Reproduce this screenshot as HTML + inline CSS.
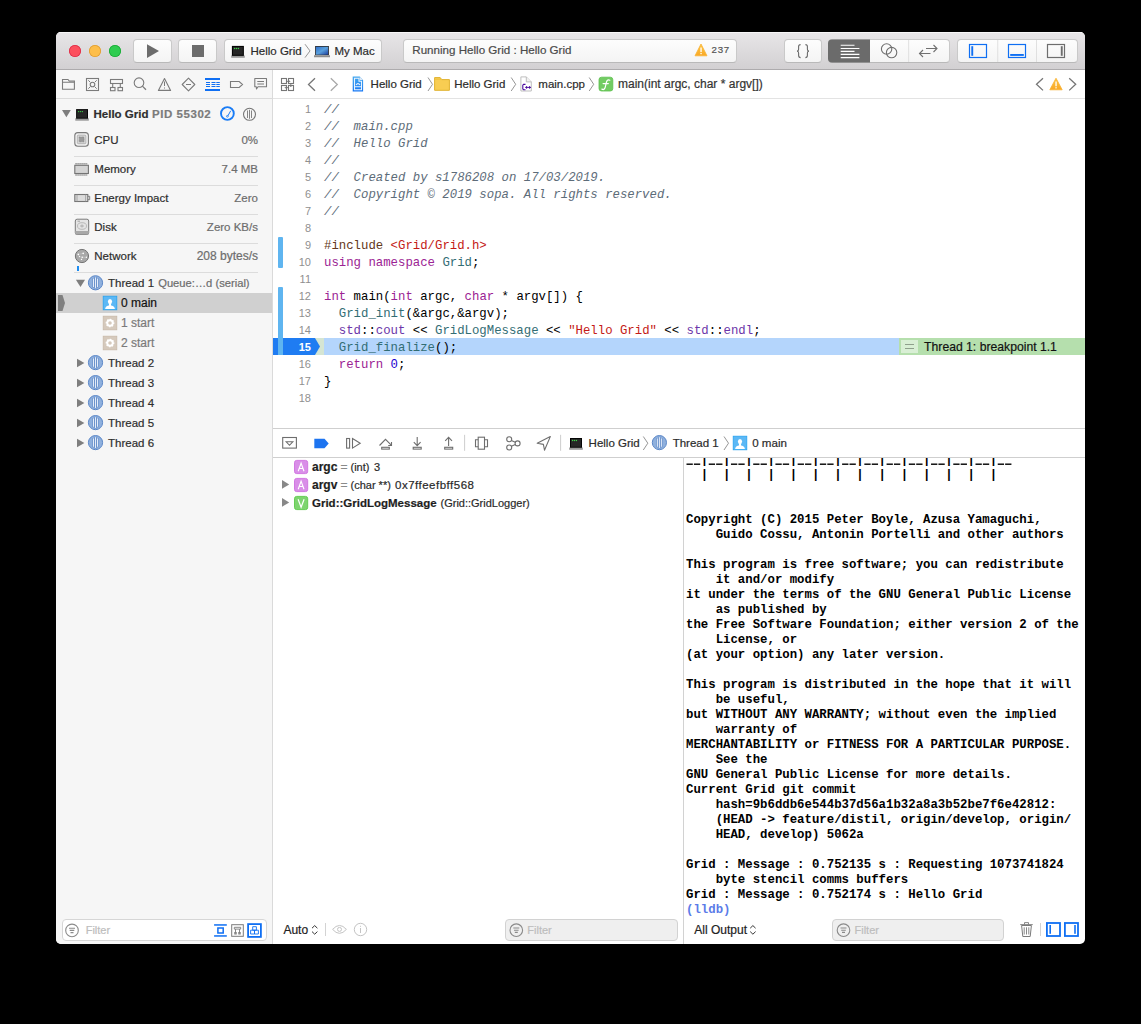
<!DOCTYPE html>
<html><head><meta charset="utf-8">
<style>
html,body{margin:0;padding:0}
body{width:1141px;height:1024px;background:#000;position:relative;overflow:hidden;font-family:"Liberation Sans",sans-serif;}
#win{position:absolute;left:0;top:0;width:1141px;height:1024px;clip-path:inset(32px 56px 80px 56px round 5px);background:#fff}
.a{position:absolute}
.t{position:absolute;white-space:pre;line-height:1;-webkit-text-stroke:0.2px currentColor}
#title{left:56px;top:32px;width:1029px;height:37px;background:linear-gradient(#e8e6e8,#d2d0d2);border-bottom:1px solid #adabad;box-shadow:inset 0 1px 0 #f7f6f7}
.btn{position:absolute;top:39px;height:23.5px;background:linear-gradient(#fdfdfd,#f4f4f4);border:1px solid #c9c9c9;border-bottom-color:#b9b9b9;border-radius:4px;box-sizing:border-box}
#nav{left:56px;top:70px;width:216px;height:28px;background:#f6f6f6;border-bottom:1px solid #dadada}
#side{left:56px;top:99px;width:216px;height:846px;background:#f6f6f6}
#sidev{left:272px;top:70px;width:1px;height:875px;background:#dadada}
#jump{left:273px;top:70px;width:812px;height:28px;background:#fff;border-bottom:1px solid #e3e3e3}
.ln{position:absolute;left:273px;width:38px;text-align:right;font-family:"Liberation Sans",sans-serif;font-size:11px;color:#8f8f8f;line-height:17px}
.cl{position:absolute;left:324px;white-space:pre;font-family:"Liberation Mono",monospace;font-size:12.33px;line-height:17px;color:#000}
.cm{color:#5d6c79;font-style:italic}
.kw{color:#9b2393}
.pp{color:#643820}
.st{color:#c41a16}
.pt{color:#326d74}
.ot{color:#6c36a9}
.nu{color:#1c00cf}
.con{position:absolute;left:686px;white-space:pre;font-family:"Liberation Mono",monospace;font-weight:bold;font-size:12.35px;line-height:15px;color:#000}
</style></head><body>
<div id="win">
  <div class="a" id="title"></div>
  <div class="a" style="left:69px;top:45px;width:12px;height:12px;border-radius:50%;background:#fc4f5e;box-shadow:inset 0 0 0 0.8px #dd2c48"></div>
  <div class="a" style="left:89px;top:45px;width:12px;height:12px;border-radius:50%;background:#fdbe4a;box-shadow:inset 0 0 0 0.8px #df9c33"></div>
  <div class="a" style="left:109px;top:45px;width:12px;height:12px;border-radius:50%;background:#2fcc50;box-shadow:inset 0 0 0 0.8px #1aa936"></div>
  <div class="btn" style="left:133px;width:38.6px"></div>
  <div class="btn" style="left:178px;width:38.6px"></div>
  <div class="btn" style="left:223.5px;width:158px"></div>
  <div class="btn" style="left:403.3px;width:334px"></div>
  <div class="btn" style="left:783.5px;width:38px"></div>
  <div class="btn" style="left:827.5px;width:122px"></div>
  <div class="btn" style="left:956.5px;width:121px"></div>
  <div class="a" id="nav"></div>
  <div class="a" id="side"></div>
  <div class="a" id="jump"></div>
  <div class="a" id="sidev"></div>
  <div class="t" style="left:250.5px;top:46px;font-size:11.5px;color:#2b2b2b;">Hello Grid</div>
  <div class="t" style="left:334.5px;top:46px;font-size:11.5px;color:#2b2b2b;">My Mac</div>
  <div class="t" style="left:412.3px;top:44px;font-size:11.6px;color:#4a4a4a;">Running Hello Grid : Hello Grid</div>
  <div class="t" style="left:711.6px;top:45px;font-size:9.7px;color:#555;letter-spacing:0.7px">237</div>
  <div class="t" style="left:370.6px;top:79px;font-size:11.5px;color:#2b2b2b;">Hello Grid</div>
  <div class="t" style="left:454.2px;top:79px;font-size:11.5px;color:#2b2b2b;">Hello Grid</div>
  <div class="t" style="left:538.3px;top:79px;font-size:11.5px;color:#2b2b2b;">main.cpp</div>
  <div class="t" style="left:618px;top:78px;font-size:12px;color:#333;">main(int argc, char * argv[])</div>
  <div class="t" style="left:93.5px;top:109px;font-size:11.5px;font-weight:bold;color:#2e2e2e;">Hello Grid</div>
  <div class="t" style="left:152px;top:109px;font-size:11.5px;font-weight:bold;color:#7b7b7b;letter-spacing:0.55px">PID 55302</div>
  <div class="t" style="left:94.3px;top:135px;font-size:11.5px;color:#2e2e2e;">CPU</div>
  <div class="t" style="right:883px;top:135px;font-size:11.5px;color:#6d6d6d;">0%</div>
  <div class="t" style="left:94.3px;top:164px;font-size:11.5px;color:#2e2e2e;">Memory</div>
  <div class="t" style="right:883px;top:164px;font-size:11.5px;color:#6d6d6d;">7.4 MB</div>
  <div class="t" style="left:94.3px;top:193px;font-size:11.5px;color:#2e2e2e;">Energy Impact</div>
  <div class="t" style="right:883px;top:193px;font-size:11.5px;color:#6d6d6d;">Zero</div>
  <div class="t" style="left:94.3px;top:222px;font-size:11.5px;color:#2e2e2e;">Disk</div>
  <div class="t" style="right:883px;top:222px;font-size:11.5px;color:#6d6d6d;">Zero KB/s</div>
  <div class="t" style="left:94.3px;top:251px;font-size:11.5px;color:#2e2e2e;">Network</div>
  <div class="t" style="right:883px;top:250px;font-size:12px;color:#6d6d6d;">208 bytes/s</div>
  <div class="a" style="left:74px;top:156px;width:184px;height:1px;background:#dcdcdc;"></div>
  <div class="a" style="left:74px;top:185px;width:184px;height:1px;background:#dcdcdc;"></div>
  <div class="a" style="left:74px;top:214px;width:184px;height:1px;background:#dcdcdc;"></div>
  <div class="a" style="left:74px;top:243px;width:184px;height:1px;background:#dcdcdc;"></div>
  <div class="a" style="left:74px;top:272px;width:184px;height:1px;background:#dcdcdc;"></div>
  <div class="a" style="left:77px;top:266px;width:2px;height:5px;background:#1d8cf0;"></div>
  <div class="t" style="left:108px;top:278px;font-size:11.5px;color:#2e2e2e;">Thread 1</div>
  <div class="t" style="left:158.2px;top:278px;font-size:11.2px;color:#6d6d6d;">Queue:…d (serial)</div>
  <div class="a" style="left:56px;top:293px;width:216px;height:20px;background:#d0d0d0;"></div>
  <div class="t" style="left:121px;top:297px;font-size:12px;color:#111;">0 main</div>
  <div class="t" style="left:121px;top:317px;font-size:12px;color:#7a7a7a;">1 start</div>
  <div class="t" style="left:121px;top:337px;font-size:12px;color:#7a7a7a;">2 start</div>
  <div class="t" style="left:108px;top:358px;font-size:11.5px;color:#2e2e2e;">Thread 2</div>
  <div class="t" style="left:108px;top:378px;font-size:11.5px;color:#2e2e2e;">Thread 3</div>
  <div class="t" style="left:108px;top:398px;font-size:11.5px;color:#2e2e2e;">Thread 4</div>
  <div class="t" style="left:108px;top:418px;font-size:11.5px;color:#2e2e2e;">Thread 5</div>
  <div class="t" style="left:108px;top:438px;font-size:11.5px;color:#2e2e2e;">Thread 6</div>
  <div class="a" style="left:278px;top:237px;width:5px;height:31px;background:#5fb5f0;border-radius:1px"></div>
  <div class="a" style="left:278px;top:287px;width:5px;height:68px;background:#5fb5f0;border-radius:1px"></div>
  <div class="a" style="left:320px;top:338px;width:765px;height:17px;background:#b4d5fc;"></div>
  <div class="a" style="left:314px;top:338px;width:10px;height:17px;background:#d5e5d3;"></div>
  <div class="a" style="left:899px;top:338px;width:186px;height:17px;background:#b5dfad;"></div>
  <div class="a" style="left:901px;top:340px;width:17px;height:13px;background:#d9efd5;"></div>
  <div class="a" style="left:905px;top:344px;width:9px;height:1px;background:#8fa08c;"></div>
  <div class="a" style="left:905px;top:348px;width:9px;height:1px;background:#8fa08c;"></div>
  <div class="t" style="left:924.1px;top:341px;font-size:12.2px;color:#111;">Thread 1: breakpoint 1.1</div>
  <svg class="a" style="left:273px;top:338px" width="48" height="17"><path d="M0 0H42L47 8.5L42 17H0Z" fill="#1f7cf2"/></svg>
  <div class="a" style="left:278px;top:338px;width:5px;height:17px;background:#5fb5f0;"></div>
  <div id="code">
  <div class="ln" style="top:101px">1</div><div class="cl" style="top:101.7px"><span class="cm">//</span></div>
  <div class="ln" style="top:118px">2</div><div class="cl" style="top:118.7px"><span class="cm">//  main.cpp</span></div>
  <div class="ln" style="top:135px">3</div><div class="cl" style="top:135.7px"><span class="cm">//  Hello Grid</span></div>
  <div class="ln" style="top:152px">4</div><div class="cl" style="top:152.7px"><span class="cm">//</span></div>
  <div class="ln" style="top:169px">5</div><div class="cl" style="top:169.7px"><span class="cm">//  Created by s1786208 on 17/03/2019.</span></div>
  <div class="ln" style="top:186px">6</div><div class="cl" style="top:186.7px"><span class="cm">//  Copyright © 2019 sopa. All rights reserved.</span></div>
  <div class="ln" style="top:203px">7</div><div class="cl" style="top:203.7px"><span class="cm">//</span></div>
  <div class="ln" style="top:220px">8</div>
  <div class="ln" style="top:237px">9</div><div class="cl" style="top:237.7px"><span class="pp">#include </span><span class="st">&lt;Grid/Grid.h&gt;</span></div>
  <div class="ln" style="top:254px">10</div><div class="cl" style="top:254.7px"><span class="kw">using namespace</span> <span class="pt">Grid</span>;</div>
  <div class="ln" style="top:271px">11</div>
  <div class="ln" style="top:288px">12</div><div class="cl" style="top:288.7px"><span class="kw">int</span> main(<span class="kw">int</span> argc, <span class="kw">char</span> * argv[]) {</div>
  <div class="ln" style="top:305px">13</div><div class="cl" style="top:305.7px">  <span class="pt">Grid_init</span>(&amp;argc,&amp;argv);</div>
  <div class="ln" style="top:322px">14</div><div class="cl" style="top:322.7px">  <span class="ot">std</span>::<span class="ot">cout</span> &lt;&lt; <span class="pt">GridLogMessage</span> &lt;&lt; <span class="st">"Hello Grid"</span> &lt;&lt; <span class="ot">std</span>::<span class="ot">endl</span>;</div>
  <div class="ln" style="top:339px;color:#fff;font-weight:bold">15</div><div class="cl" style="top:339.7px">  <span class="pt">Grid_finalize</span>();</div>
  <div class="ln" style="top:356px">16</div><div class="cl" style="top:356.7px">  <span class="kw">return</span> <span class="nu">0</span>;</div>
  <div class="ln" style="top:373px">17</div><div class="cl" style="top:373.7px">}</div>
  <div class="ln" style="top:390px">18</div>
  </div>
  <div class="a" style="left:273px;top:428px;width:812px;height:1px;background:#cfcfcf;"></div>
  <div class="a" style="left:273px;top:457px;width:812px;height:1px;background:#cfcfcf;"></div>
  <div class="t" style="left:588.6px;top:438px;font-size:11.5px;color:#2b2b2b;">Hello Grid</div>
  <div class="t" style="left:672.7px;top:438px;font-size:11.5px;color:#2b2b2b;">Thread 1</div>
  <div class="t" style="left:752.2px;top:437px;font-size:11.6px;color:#2b2b2b;">0 main</div>
  <div class="a" style="left:683px;top:458px;width:1px;height:487px;background:#d2d2d2;"></div>
  <div class="t" style="left:312px;top:461px;font-size:12px;font-weight:bold;color:#1e1e1e;">argc</div>
  <div class="t" style="left:340.5px;top:461px;font-size:12px;color:#8a8a8a;">=</div>
  <div class="t" style="left:350.5px;top:462px;font-size:11px;color:#2a2a2a;">(int)</div>
  <div class="t" style="left:374px;top:462px;font-size:11px;color:#2a2a2a;">3</div>
  <div class="t" style="left:312px;top:479px;font-size:12px;font-weight:bold;color:#1e1e1e;">argv</div>
  <div class="t" style="left:340.5px;top:479px;font-size:12px;color:#8a8a8a;">=</div>
  <div class="t" style="left:350.5px;top:480px;font-size:11px;color:#2a2a2a;">(char **)</div>
  <div class="t" style="left:395px;top:480px;font-size:11.5px;color:#2a2a2a;letter-spacing:0.5px">0x7ffeefbff568</div>
  <div class="t" style="left:312px;top:498px;font-size:11.5px;font-weight:bold;color:#1e1e1e;">Grid::GridLogMessage</div>
  <div class="t" style="left:440.5px;top:498px;font-size:11px;color:#2a2a2a;">(Grid::GridLogger)</div>
  <div class="a" style="left:684px;top:458px;width:401px;height:460px;overflow:hidden"><div class="con" style="left:2px;top:-5.3px">  |  |  |  |  |  |  |  |  |  |  |  |  |  |  
  |  |  |  |  |  |  |  |  |  |  |  |  |  |


Copyright (C) 2015 Peter Boyle, Azusa Yamaguchi,
    Guido Cossu, Antonin Portelli and other authors

This program is free software; you can redistribute
    it and/or modify
it under the terms of the GNU General Public License
    as published by
the Free Software Foundation; either version 2 of the
    License, or
(at your option) any later version.

This program is distributed in the hope that it will
    be useful,
but WITHOUT ANY WARRANTY; without even the implied
    warranty of
MERCHANTABILITY or FITNESS FOR A PARTICULAR PURPOSE.
    See the
GNU General Public License for more details.
Current Grid git commit
    hash=9b6ddb6e544b37d56a1b32a8a3b52be7f6e42812:
    (HEAD -&gt; feature/distil, origin/develop, origin/
    HEAD, develop) 5062a

Grid : Message : 0.752135 s : Requesting 1073741824
    byte stencil comms buffers
Grid : Message : 0.752174 s : Hello Grid
<span style="color:#5b7be8">(lldb)</span></div></div>
  <svg class="a" style="left:0;top:0" width="1141" height="1024"><g fill="#000"><rect x="686.50" y="463.5" width="6.3" height="1.4"/><rect x="693.91" y="463.5" width="6.3" height="1.4"/><rect x="708.73" y="463.5" width="6.3" height="1.4"/><rect x="716.14" y="463.5" width="6.3" height="1.4"/><rect x="730.96" y="463.5" width="6.3" height="1.4"/><rect x="738.37" y="463.5" width="6.3" height="1.4"/><rect x="753.19" y="463.5" width="6.3" height="1.4"/><rect x="760.60" y="463.5" width="6.3" height="1.4"/><rect x="775.42" y="463.5" width="6.3" height="1.4"/><rect x="782.83" y="463.5" width="6.3" height="1.4"/><rect x="797.65" y="463.5" width="6.3" height="1.4"/><rect x="805.06" y="463.5" width="6.3" height="1.4"/><rect x="819.88" y="463.5" width="6.3" height="1.4"/><rect x="827.29" y="463.5" width="6.3" height="1.4"/><rect x="842.11" y="463.5" width="6.3" height="1.4"/><rect x="849.52" y="463.5" width="6.3" height="1.4"/><rect x="864.34" y="463.5" width="6.3" height="1.4"/><rect x="871.75" y="463.5" width="6.3" height="1.4"/><rect x="886.57" y="463.5" width="6.3" height="1.4"/><rect x="893.98" y="463.5" width="6.3" height="1.4"/><rect x="908.80" y="463.5" width="6.3" height="1.4"/><rect x="916.21" y="463.5" width="6.3" height="1.4"/><rect x="931.03" y="463.5" width="6.3" height="1.4"/><rect x="938.44" y="463.5" width="6.3" height="1.4"/><rect x="953.26" y="463.5" width="6.3" height="1.4"/><rect x="960.67" y="463.5" width="6.3" height="1.4"/><rect x="975.49" y="463.5" width="6.3" height="1.4"/><rect x="982.90" y="463.5" width="6.3" height="1.4"/><rect x="997.72" y="463.5" width="6.3" height="1.4"/><rect x="1005.13" y="463.5" width="6.3" height="1.4"/></g></svg>
<svg class="a" style="left:0;top:0" width="1141" height="1024" viewBox="0 0 1141 1024">
 <defs>
  <linearGradient id="gproj" x1="0" y1="0" x2="0" y2="1"><stop offset="0" stop-color="#45a8ee"/><stop offset="1" stop-color="#1577f5"/></linearGradient>
  <linearGradient id="gwarn" x1="0" y1="0" x2="0" y2="1"><stop offset="0" stop-color="#fdc646"/><stop offset="1" stop-color="#f9a825"/></linearGradient>
  <linearGradient id="gscreen" x1="0" y1="0" x2="1" y2="1"><stop offset="0" stop-color="#2f6fc9"/><stop offset="0.5" stop-color="#5aa0dc"/><stop offset="1" stop-color="#1c3f9e"/></linearGradient>
  <radialGradient id="gnet" cx="0.5" cy="0.4" r="0.6"><stop offset="0" stop-color="#b8b8b8"/><stop offset="1" stop-color="#6e6e6e"/></radialGradient>
 </defs>
 <!-- play / stop -->
 <path d="M147 44.2L159 51L147 57.9Z" fill="#6c6c6c"/>
 <rect x="192" y="45" width="12" height="12" fill="#6c6c6c"/>
 <!-- scheme terminal icon -->
 <rect x="231.2" y="55.5" width="13.6" height="2.3" fill="#9a9a9a"/>
 <rect x="231.9" y="45.9" width="12" height="10" fill="#050505"/>
 <rect x="233" y="47" width="9.8" height="7.8" fill="#262626"/>
 <circle cx="234.6" cy="48.5" r="0.7" fill="#3fd24a"/><circle cx="236.5" cy="48.5" r="0.7" fill="#3fd24a"/><circle cx="238.4" cy="48.5" r="0.7" fill="#3fd24a"/>
 <path d="M305 44.2L310 50.9L305 57.6" fill="none" stroke="#8a8a8a" stroke-width="0.9"/>
 <!-- laptop -->
 <rect x="315.1" y="46" width="13.8" height="9.2" fill="#2b2b2b"/>
 <rect x="315.9" y="46.8" width="12.2" height="7.9" fill="url(#gscreen)"/>
 <path d="M314 55.2H330V57.3H314Z" fill="#8d8d8d"/>
 <!-- activity warning -->
 <path d="M701 44L707 55.8H695Z" fill="url(#gwarn)" stroke="#f9b233" stroke-width="0.8" stroke-linejoin="round"/>
 <rect x="700.4" y="47.5" width="1.3" height="4.6" fill="#fff"/><rect x="700.4" y="53" width="1.3" height="1.2" fill="#fff"/>
 <!-- braces -->
 <path d="M800.6 44.6Q798.6 44.6 798.6 46.6V49.3Q798.6 51 797 51.1Q798.6 51.2 798.6 52.9V55.6Q798.6 57.6 800.6 57.6M805.4 44.6Q807.4 44.6 807.4 46.6V49.3Q807.4 51 809 51.1Q807.4 51.2 807.4 52.9V55.6Q807.4 57.6 805.4 57.6" fill="none" stroke="#6a6a6a" stroke-width="1.1"/>
 <!-- segmented editor group -->
 <path d="M832 39.5H870V62.5H832A4 4 0 0 1 828 58.5V43.5A4 4 0 0 1 832 39.5Z" fill="#6b6b6b"/>
 <g stroke="#fff" stroke-width="1.1">
  <path d="M840.7 45.3H854.5M840.7 48.5H859.4M840.7 51.4H854.5M840.7 54.4H859.4M840.7 57.6H859.4"/>
 </g>
 <circle cx="886.6" cy="49" r="5.2" fill="none" stroke="#707070" stroke-width="1.1"/>
 <circle cx="891.6" cy="52.6" r="5.2" fill="none" stroke="#707070" stroke-width="1.1"/>
 <rect x="908.3" y="40" width="0.8" height="22" fill="#dadada"/>
 <path d="M926 48.5H937M933.5 45L937 48.5L933.5 52M919.5 53.5H930.5M923 50L919.5 53.5L923 57" fill="none" stroke="#707070" stroke-width="1.1"/>
 <!-- layout group -->
 <rect x="997.4" y="40" width="0.8" height="22" fill="#dadada"/>
 <rect x="1036.2" y="40" width="0.8" height="22" fill="#dadada"/>
 <rect x="969.5" y="44.5" width="17" height="13" fill="none" stroke="#0f6ff3" stroke-width="1.2"/>
 <rect x="971.3" y="46.2" width="1.9" height="9.6" fill="#0f6ff3"/>
 <rect x="1008.5" y="44.5" width="17" height="13" fill="none" stroke="#0f6ff3" stroke-width="1.2"/>
 <rect x="1010.2" y="54" width="13.6" height="1.9" fill="#0f6ff3"/>
 <rect x="1047.5" y="44.5" width="17" height="13" fill="none" stroke="#6e6e6e" stroke-width="1.2"/>
 <rect x="1060.8" y="46.2" width="1.9" height="9.6" fill="#6e6e6e"/>

 <!-- navigator icons -->
 <g fill="none" stroke="#7b7b7b" stroke-width="1.1">
  <path d="M62.5 89.2V79.5H68L69.2 81H74.4V89.2Z M62.5 82.3H74.4"/>
  <rect x="86.5" y="78.5" width="12" height="12"/>
  <circle cx="92.5" cy="84.5" r="2.3"/>
  <path d="M88.3 80.3L90 82M96.7 80.3L95 82M88.3 88.7L90 87M96.7 88.7L95 87" stroke-width="1"/>
  <rect x="110.5" y="79.5" width="12" height="4"/>
  <rect x="110.5" y="87.5" width="4.5" height="3.2"/><rect x="118" y="87.5" width="4.5" height="3.2"/>
  <path d="M112.7 83.5V87.5M120.3 83.5V87.5"/>
  <circle cx="139" cy="82.7" r="4.8"/>
  <path d="M142.4 86.1L146 89.7" stroke-width="1.3"/>
  <path d="M164.5 78.6L170.6 90.4H158.4Z" stroke-linejoin="round"/>
  <path d="M188.5 78.2L194.8 84.5L188.5 90.8L182.2 84.5Z" stroke-linejoin="round"/>
  <path d="M186 84.5H191"/>
  <path d="M230.5 81.5H239.2L242.5 84.5L239.2 87.5H230.5Z"/>
  <path d="M254.8 78.5H266.5V86.8H258L256.5 89L256.3 86.8H254.8Z" stroke-linejoin="round"/>
  <path d="M257.3 81.5H264M257.3 84H264"/>
 </g>
 <rect x="164" y="81.5" width="1" height="4.5" fill="#7b7b7b"/><rect x="164" y="87.5" width="1" height="1" fill="#7b7b7b"/>
 <g fill="#0f6ff3">
  <rect x="205" y="78" width="15" height="2"/><rect x="205" y="89" width="15" height="2"/>
  <rect x="206" y="82" width="4" height="1"/><rect x="211.5" y="82" width="4" height="1"/><rect x="216.3" y="82" width="3.5" height="1"/>
  <rect x="206" y="84" width="4" height="1"/><rect x="211.5" y="84" width="4" height="1"/><rect x="216.3" y="84" width="3.5" height="1"/>
  <rect x="206" y="86" width="4" height="1"/><rect x="211.5" y="86" width="4" height="1"/><rect x="216.3" y="86" width="3.5" height="1"/>
 </g>

 <!-- jump bar icons -->
 <g fill="none" stroke="#767676" stroke-width="1.1">
  <rect x="281.5" y="78.5" width="5" height="5"/><rect x="281.5" y="85.5" width="5" height="5"/>
  <rect x="288.5" y="78.5" width="5" height="5"/><rect x="288.5" y="85.5" width="5" height="5"/>
  <path d="M286.6 81.4H289.8M288.8 80.4L289.8 81.4L288.8 82.4M290.8 83.6V86.6M289.8 85.6L290.8 86.6L291.8 85.6M288.4 87.6H285.2M286.2 86.6L285.2 87.6L286.2 88.6" stroke-width="0.9"/>
  <path d="M315 78.2L308.5 84.5L315 90.8" stroke-width="1.3"/>
  <path d="M330.8 78.2L337.3 84.5L330.8 90.8" stroke="#a9a9a9" stroke-width="1.3"/>
  <path d="M1043 78.2L1036.5 84.3L1043 90.4" stroke-width="1.3"/>
  <path d="M1069.2 78.2L1075.7 84.3L1069.2 90.4" stroke-width="1.3"/>
 </g>
 <path d="M1056 78.2L1062.2 89.8H1049.8Z" fill="url(#gwarn)" stroke="#f9b233" stroke-width="0.8" stroke-linejoin="round"/>
 <rect x="1055.4" y="81.5" width="1.3" height="4.8" fill="#fff"/><rect x="1055.4" y="87.2" width="1.3" height="1.2" fill="#fff"/>
 <!-- project icon -->
 <path d="M352.7 76.6H359.8L363.1 79.9V91.4H352.7Z" fill="url(#gproj)"/>
 <path d="M359.8 76.6V79.9H363.1Z" fill="#dbe9f7"/>
 <path d="M354.5 78.3H359V81.3H361.5V89.7H354.5Z" fill="none" stroke="#eaf4fe" stroke-width="1.1"/>
 <path d="M354.5 86.8H361.5" stroke="#eaf4fe" stroke-width="1.1"/>
 <path d="M356 85Q358 82.3 360 85" fill="none" stroke="#eaf4fe" stroke-width="1.2"/>
 <path d="M428 77.5L432.5 84.3L428 91" fill="none" stroke="#8a8a8a" stroke-width="0.9"/>
 <path d="M511.2 77.5L515.7 84.3L511.2 91" fill="none" stroke="#8a8a8a" stroke-width="0.9"/>
 <path d="M589.2 77.5L593.7 84.3L589.2 91" fill="none" stroke="#8a8a8a" stroke-width="0.9"/>
 <!-- folder icon -->
 <path d="M434.6 77.6H440.2L441.8 79.6H449.4V90.3H434.6Z" fill="#f8cd52" stroke="#e0b22f" stroke-width="1" stroke-linejoin="round"/>
 <path d="M435.2 79.3H441" stroke="#eebf3a" stroke-width="0.8"/>
 <!-- cpp icon -->
 <path d="M520.9 76.9H526.3L531.3 81.9V91H520.9Z" fill="#fff" stroke="#b8b8b8" stroke-width="0.9" stroke-linejoin="round"/>
 <path d="M526.3 76.9V81.9H531.3" fill="#f2f2f2" stroke="#b8b8b8" stroke-width="0.9"/>
 <path d="M525.5 84.4H523.6L522.8 85.2V89L523.6 89.8H525.5" fill="none" stroke="#4a0a9e" stroke-width="1.1"/>
 <path d="M525.2 87.4H531M526.6 86.1V88.7M529.6 86.1V88.7" fill="none" stroke="#4a0a9e" stroke-width="1"/>
 <!-- f icon -->
 <rect x="599" y="77.2" width="13.8" height="13.8" rx="2.5" fill="#72cc63" stroke="#5cbf4c" stroke-width="0.8"/>
 <path d="M609.8 80.2Q608.2 79.2 607.1 80.6Q606.5 81.5 605.9 84.5Q605.2 88.2 604.3 89.1Q603.3 89.9 601.9 89.1M603.1 83.6H608.3" fill="none" stroke="#fff" stroke-width="1.25" stroke-linecap="round"/>

 <!-- sidebar -->
 <path d="M62 110.1H70.8L66.4 117.3Z" fill="#7e7e7e"/>
 <rect x="75.3" y="118.2" width="13.5" height="2.5" fill="#9a9a9a"/>
 <rect x="76.1" y="109.1" width="11.9" height="9.6" fill="#050505"/>
 <rect x="77.1" y="110.1" width="9.9" height="7.6" fill="#262626"/>
 <circle cx="78.6" cy="111.6" r="0.7" fill="#3fd24a"/><circle cx="80.5" cy="111.6" r="0.7" fill="#3fd24a"/><circle cx="82.4" cy="111.6" r="0.7" fill="#3fd24a"/>
 <circle cx="227.4" cy="113.5" r="6.4" fill="none" stroke="#1a7cf5" stroke-width="1.9"/>
 <path d="M227.9 115.8L230.7 110.8" stroke="#1a7cf5" stroke-width="1"/>
 <circle cx="227.4" cy="116.3" r="0.9" fill="none" stroke="#1a7cf5" stroke-width="0.8"/>
 <circle cx="249.5" cy="114.3" r="6" fill="none" stroke="#777" stroke-width="1.1"/>
 <path d="M247.5 110.5V118M249.5 109.8V118.8M251.5 110.5V118" stroke="#777" stroke-width="0.9"/>
 <!-- CPU -->
 <rect x="74.8" y="132.6" width="13.6" height="13.6" rx="3" fill="#f0f0f0" stroke="#7a7a7a" stroke-width="1.1"/>
 <rect x="77.3" y="135.1" width="8.6" height="8.6" rx="1" fill="#d6d6d6" stroke="#9a9a9a" stroke-width="0.6"/>
 <rect x="79.2" y="137" width="4.8" height="4.8" fill="#9a9a9a" stroke="#888" stroke-width="0.8" stroke-dasharray="0.8 0.6"/>
 <!-- memory -->
 <rect x="74.8" y="165.3" width="13.6" height="8.2" fill="#d4d4d4" stroke="#747474" stroke-width="1.1"/>
 <path d="M75.5 163.8H87.7M75.5 175H87.7" stroke="#747474" stroke-width="1.6" stroke-dasharray="1.1 0.9"/>
 <!-- energy -->
 <rect x="74.8" y="194.5" width="13" height="7" fill="#dcdcdc" stroke="#747474" stroke-width="1.1"/>
 <path d="M77 194.6V201.4M85.6 194.6V201.4" stroke="#9a9a9a" stroke-width="0.8"/>
 <path d="M87.8 196.3H89.7V199.7H87.8" fill="none" stroke="#747474" stroke-width="0.9"/>
 <!-- disk -->
 <rect x="75.3" y="219.2" width="13.4" height="15.3" rx="1.8" fill="#e4e4e4" stroke="#7a7a7a" stroke-width="1"/>
 <rect x="75.3" y="231" width="13.4" height="3.5" fill="#a8a8a8"/>
 <ellipse cx="82" cy="226" rx="4.5" ry="3.3" fill="none" stroke="#adadad" stroke-width="0.8"/>
 <ellipse cx="82" cy="226" rx="1.4" ry="0.9" fill="none" stroke="#999" stroke-width="0.7"/>
 <path d="M77.5 221.2H80" stroke="#888" stroke-width="0.7"/>
 <!-- network -->
 <circle cx="81.95" cy="256" r="6.6" fill="#a9a9a9" stroke="#747474" stroke-width="1"/>
 <path d="M78.3 254.4L83.2 253.4M79.5 256.6L82.3 257.3L86.4 257.3M82.3 257.3L81.5 259.4M78.3 254.4L79.5 256.6" stroke="#c8c8c8" stroke-width="0.6" fill="none"/>
 <g fill="#fff"><circle cx="78.3" cy="254.4" r="0.8"/><circle cx="83.2" cy="253.4" r="0.8"/><circle cx="79.5" cy="256.6" r="0.7"/><circle cx="82.3" cy="257.3" r="0.8"/><circle cx="86.4" cy="257.3" r="0.7"/><circle cx="81.5" cy="259.4" r="0.7"/></g>
 <!-- threads -->
 <path d="M75.9 279.8H85L80.5 286.9Z" fill="#7e7e7e"/>
<circle cx="95.5" cy="282.8" r="7.1" fill="#8fb0dd" stroke="#5b87c8" stroke-width="1"/><path d="M93.5 278.2V287.4M95.5 277.0V288.6M97.5 278.2V287.4" stroke="#6a92cc" stroke-width="2.3"/><path d="M93.5 278.6V287.0M95.5 277.4V288.2M97.5 278.6V287.0" stroke="#f2f6fd" stroke-width="0.9"/>
 <path d="M77 358.7L84.4 363L77 367.3Z" fill="#7e7e7e"/>
 <circle cx="95.5" cy="362.6" r="7.1" fill="#8fb0dd" stroke="#5b87c8" stroke-width="1"/><path d="M93.5 358.0V367.2M95.5 356.8V368.4M97.5 358.0V367.2" stroke="#6a92cc" stroke-width="2.3"/><path d="M93.5 358.4V366.8M95.5 357.2V368.0M97.5 358.4V366.8" stroke="#f2f6fd" stroke-width="0.9"/>
 <path d="M77 378.7L84.4 383L77 387.3Z" fill="#7e7e7e"/>
 <circle cx="95.5" cy="382.6" r="7.1" fill="#8fb0dd" stroke="#5b87c8" stroke-width="1"/><path d="M93.5 378.0V387.2M95.5 376.8V388.4M97.5 378.0V387.2" stroke="#6a92cc" stroke-width="2.3"/><path d="M93.5 378.4V386.8M95.5 377.2V388.0M97.5 378.4V386.8" stroke="#f2f6fd" stroke-width="0.9"/>
 <path d="M77 398.7L84.4 403L77 407.3Z" fill="#7e7e7e"/>
 <circle cx="95.5" cy="402.6" r="7.1" fill="#8fb0dd" stroke="#5b87c8" stroke-width="1"/><path d="M93.5 398.0V407.2M95.5 396.8V408.4M97.5 398.0V407.2" stroke="#6a92cc" stroke-width="2.3"/><path d="M93.5 398.4V406.8M95.5 397.2V408.0M97.5 398.4V406.8" stroke="#f2f6fd" stroke-width="0.9"/>
 <path d="M77 418.7L84.4 423L77 427.3Z" fill="#7e7e7e"/>
 <circle cx="95.5" cy="422.6" r="7.1" fill="#8fb0dd" stroke="#5b87c8" stroke-width="1"/><path d="M93.5 418.0V427.2M95.5 416.8V428.4M97.5 418.0V427.2" stroke="#6a92cc" stroke-width="2.3"/><path d="M93.5 418.4V426.8M95.5 417.2V428.0M97.5 418.4V426.8" stroke="#f2f6fd" stroke-width="0.9"/>
 <path d="M77 438.7L84.4 443L77 447.3Z" fill="#7e7e7e"/>
 <circle cx="95.5" cy="442.6" r="7.1" fill="#8fb0dd" stroke="#5b87c8" stroke-width="1"/><path d="M93.5 438.0V447.2M95.5 436.8V448.4M97.5 438.0V447.2" stroke="#6a92cc" stroke-width="2.3"/><path d="M93.5 438.4V446.8M95.5 437.2V448.0M97.5 438.4V446.8" stroke="#f2f6fd" stroke-width="0.9"/>
 <path d="M58 295H62.5L65 303L62.5 311H58Z" fill="#808080"/>
 <rect x="103.2" y="296.2" width="13.6" height="13.6" fill="#5cb8f5" stroke="#27a2f0" stroke-width="0.8"/>
 <ellipse cx="110" cy="301.6" rx="2.1" ry="2.6" fill="#fff"/><rect x="109" y="303.5" width="2" height="2.5" fill="#fff"/><path d="M105.1 309.0Q105.4 306.3 108.5 305.6H111.5Q114.6 306.3 114.9 309.0Z" fill="#fff"/>
 <rect x="103.2" y="316.2" width="13.6" height="13.6" fill="#d5c9bc" stroke="#c8b9a9" stroke-width="0.8"/>
 <circle cx="110" cy="323" r="2.75" fill="none" stroke="#fff" stroke-width="1.9"/><circle cx="110" cy="323" r="3.7" fill="none" stroke="#fff" stroke-width="1.3" stroke-dasharray="1.45 1.455" transform="rotate(-10 110 323)"/>
 <rect x="103.2" y="336.2" width="13.6" height="13.6" fill="#d5c9bc" stroke="#c8b9a9" stroke-width="0.8"/>
 <circle cx="110" cy="343" r="2.75" fill="none" stroke="#fff" stroke-width="1.9"/><circle cx="110" cy="343" r="3.7" fill="none" stroke="#fff" stroke-width="1.3" stroke-dasharray="1.45 1.455" transform="rotate(-10 110 343)"/>

 <!-- debug bar icons -->
 <g fill="none" stroke="#6e6e6e" stroke-width="1.1">
  <rect x="282.7" y="437.5" width="13.7" height="10.6"/>
  <path d="M286.2 441.8H292.8L289.5 445.3Z"/>
  <rect x="346.6" y="438.5" width="3" height="9.6"/>
  <path d="M352.5 438.5L360.2 443.3L352.5 448.1Z" stroke-linejoin="miter"/>
  <path d="M379.5 445.5L385.5 439.3L391.5 445.3M391.5 442V445.5H388.2"/>
  <rect x="381.7" y="447.3" width="7.6" height="1.8"/>
  <path d="M417.2 437V445.5M413.8 442.2L417.2 445.6L420.6 442.2"/>
  <rect x="413.2" y="447.3" width="8" height="1.8"/>
  <path d="M448.6 446V437.5M445.2 440.8L448.6 437.4L452 440.8"/>
  <rect x="444.7" y="447.3" width="8" height="1.8"/>
  <rect x="478.2" y="437.2" width="6.3" height="12"/>
  <path d="M478.2 439.8H475.5V446.8H478.2M484.5 439.8H487.5V446.8H484.5"/>
  <circle cx="509.2" cy="439.3" r="2.5"/><circle cx="509.2" cy="447.5" r="2.5"/><circle cx="517.6" cy="443.4" r="2.5"/>
  <path d="M511.4 440.5L515.3 442.3M511.4 446.3L515.3 444.5"/>
  <path d="M550.3 436.6L537.2 443.3L543.4 444.4L544.5 450.2Z" stroke-linejoin="round"/>
 </g>
 <rect x="464.2" y="434.8" width="0.9" height="16" fill="#c8c8c8"/>
 <rect x="560.2" y="434.8" width="0.9" height="16" fill="#c8c8c8"/>
 <path d="M314.3 438.8H324.5L328.7 443.5L324.5 448.3H314.3Z" fill="#1d74f0"/>
 <!-- debug jump bar -->
 <rect x="569.2" y="447.5" width="13.6" height="2.3" fill="#9a9a9a"/>
 <rect x="570" y="438" width="12" height="9.8" fill="#050505"/>
 <rect x="571" y="439" width="10" height="7.8" fill="#262626"/>
 <circle cx="572.6" cy="440.5" r="0.7" fill="#3fd24a"/><circle cx="574.5" cy="440.5" r="0.7" fill="#3fd24a"/><circle cx="576.4" cy="440.5" r="0.7" fill="#3fd24a"/>
 <path d="M643.3 436.5L647.8 443.2L643.3 450" fill="none" stroke="#8a8a8a" stroke-width="0.9"/>
 <path d="M724 436.5L728.5 443.2L724 450" fill="none" stroke="#8a8a8a" stroke-width="0.9"/>
 <circle cx="659.4" cy="442.6" r="7.1" fill="#8fb0dd" stroke="#5b87c8" stroke-width="1"/><path d="M657.4 438.0V447.2M659.4 436.8V448.4M661.4 438.0V447.2" stroke="#6a92cc" stroke-width="2.3"/><path d="M657.4 438.4V446.8M659.4 437.2V448.0M661.4 438.4V446.8" stroke="#f2f6fd" stroke-width="0.9"/>
 <rect x="733.2" y="436.2" width="13.6" height="13.6" fill="#5cb8f5" stroke="#27a2f0" stroke-width="0.8"/>
 <ellipse cx="740" cy="441.6" rx="2.1" ry="2.6" fill="#fff"/><rect x="739" y="443.5" width="2" height="2.5" fill="#fff"/><path d="M735.1 449.0Q735.4 446.3 738.5 445.6H741.5Q744.6 446.3 744.9 449.0Z" fill="#fff"/>

 <!-- variables badges -->
 <rect x="294.5" y="460.4" width="13.2" height="13.2" rx="2.2" fill="#d98ee8" stroke="#cf6fe0" stroke-width="0.9"/>
 <rect x="294.5" y="478.4" width="13.2" height="13.2" rx="2.2" fill="#d98ee8" stroke="#cf6fe0" stroke-width="0.9"/>
 <rect x="294.5" y="496.4" width="13.2" height="13.2" rx="2.2" fill="#7ed46f" stroke="#5bcb4a" stroke-width="0.9"/>
 <path d="M298.2 471.3L301.1 463.2L304 471.3M299.2 468.5H303" fill="none" stroke="#fff" stroke-width="1.1"/>
 <path d="M298.2 489.3L301.1 481.2L304 489.3M299.2 486.5H303" fill="none" stroke="#fff" stroke-width="1.1"/>
 <path d="M298.1 499.2L301.1 507.3L304.1 499.2" fill="none" stroke="#fff" stroke-width="1.2"/>
 <path d="M282 480.1L289.2 484.5L282 488.8Z" fill="#888"/>
 <path d="M282 498.1L289.2 502.5L282 506.8Z" fill="#888"/>
</svg>
  <div class="a" style="left:62px;top:919px;width:204.5px;height:22px;border:1px solid #d6d6d6;border-radius:4px;background:#fff;box-sizing:border-box"></div>
  <div class="a" style="left:505px;top:919px;width:173px;height:22px;border:1px solid #d2d2d2;border-radius:4px;background:#efefef;box-sizing:border-box"></div>
  <div class="a" style="left:832px;top:919px;width:172px;height:22px;border:1px solid #d2d2d2;border-radius:4px;background:#efefef;box-sizing:border-box"></div>
  <div class="t" style="left:85.7px;top:925px;font-size:11px;color:#bdbdbd;">Filter</div>
  <div class="t" style="left:527.3px;top:925px;font-size:11px;color:#bdbdbd;">Filter</div>
  <div class="t" style="left:854.5px;top:925px;font-size:11px;color:#bdbdbd;">Filter</div>
  <div class="t" style="left:283.4px;top:924px;font-size:12px;color:#222;">Auto</div>
  <div class="t" style="left:694.3px;top:924px;font-size:12px;color:#222;">All Output</div>
<svg class="a" style="left:0;top:0" width="1141" height="1024" viewBox="0 0 1141 1024">
 <g fill="none" stroke="#8a8a8a" stroke-width="1.1">
  <circle cx="72" cy="930.4" r="6.3"/>
  <path d="M69 928.2H75M69.7 930.4H74.3M70.5 932.6H73.5"/>
  <circle cx="516.3" cy="930.2" r="6.3"/>
  <path d="M513.3 928H519.3M514 930.2H518.6M514.8 932.4H517.8"/>
  <circle cx="843.5" cy="930.2" r="6.3"/>
  <path d="M840.5 928H846.5M841.2 930.2H845.8M842 932.4H845"/>
 </g>
 <g fill="#0f6ff3">
  <rect x="214.1" y="924.2" width="12.7" height="1.5"/><rect x="214.1" y="935.2" width="12.7" height="1.5"/>
 </g>
 <rect x="217.9" y="928" width="5.3" height="5" fill="none" stroke="#0f6ff3" stroke-width="1.5"/>
 <rect x="231.7" y="924.7" width="11.6" height="11.6" fill="none" stroke="#7b7b7b" stroke-width="1"/>
 <path d="M234.3 927.3H240.7V929.1H234.3ZM235.5 929.1V932.5M239.5 929.1V932.5" fill="none" stroke="#7b7b7b" stroke-width="0.9"/>
 <rect x="234.7" y="932.5" width="1.6" height="1.6" fill="none" stroke="#7b7b7b" stroke-width="0.8"/>
 <rect x="238.7" y="932.5" width="1.6" height="1.6" fill="none" stroke="#7b7b7b" stroke-width="0.8"/>
 <rect x="248.1" y="924.1" width="12.8" height="12.8" fill="none" stroke="#0f6ff3" stroke-width="1.8"/>
 <path d="M252.7 926.7H256.4V930.2H252.7ZM250.6 930.2H254.5V934H250.6ZM254.5 930.2H258.4V934H254.5Z" fill="none" stroke="#0f6ff3" stroke-width="0.9"/>
 <!-- auto chevrons -->
 <path d="M312 928.2L314.7 925.6L317.4 928.2M312 931.6L314.7 934.2L317.4 931.6" fill="none" stroke="#333" stroke-width="1"/>
 <rect x="325" y="923" width="0.9" height="13" fill="#cfcfcf"/>
 <path d="M332.6 929.4Q339.5 921.5 346.4 929.4Q339.5 937.3 332.6 929.4Z" fill="none" stroke="#c4c4c4" stroke-width="1"/>
 <circle cx="339.5" cy="929.4" r="2" fill="none" stroke="#c4c4c4" stroke-width="1"/>
 <circle cx="360.5" cy="929.5" r="6.2" fill="none" stroke="#c4c4c4" stroke-width="1"/>
 <rect x="360" y="928" width="1" height="5" fill="#c4c4c4"/><rect x="360" y="925.8" width="1" height="1" fill="#c4c4c4"/>
 <!-- all output chevrons -->
 <path d="M750.2 928.2L752.9 925.6L755.6 928.2M750.2 931.6L752.9 934.2L755.6 931.6" fill="none" stroke="#333" stroke-width="1"/>
 <!-- trash -->
 <path d="M1021.6 925.5H1031.4L1030.2 936.5H1022.8Z" fill="none" stroke="#7b7b7b" stroke-width="1"/>
 <path d="M1020.2 924.6H1032.8M1024.5 924.4V922.6H1028.5V924.4M1024.2 927.3V934.5M1026.5 927.3V934.5M1028.8 927.3V934.5" fill="none" stroke="#7b7b7b" stroke-width="0.9"/>
 <rect x="1040" y="923" width="0.9" height="13" fill="#cfcfcf"/>
 <rect x="1046.9" y="923" width="13.1" height="13" fill="none" stroke="#0f6ff3" stroke-width="1.8"/>
 <rect x="1049.4" y="925" width="1.6" height="8.8" fill="#0f6ff3"/>
 <rect x="1064.9" y="923" width="13.1" height="13" fill="none" stroke="#0f6ff3" stroke-width="1.8"/>
 <rect x="1074.2" y="925" width="1.6" height="8.8" fill="#0f6ff3"/>
</svg>
</div>
</body></html>
